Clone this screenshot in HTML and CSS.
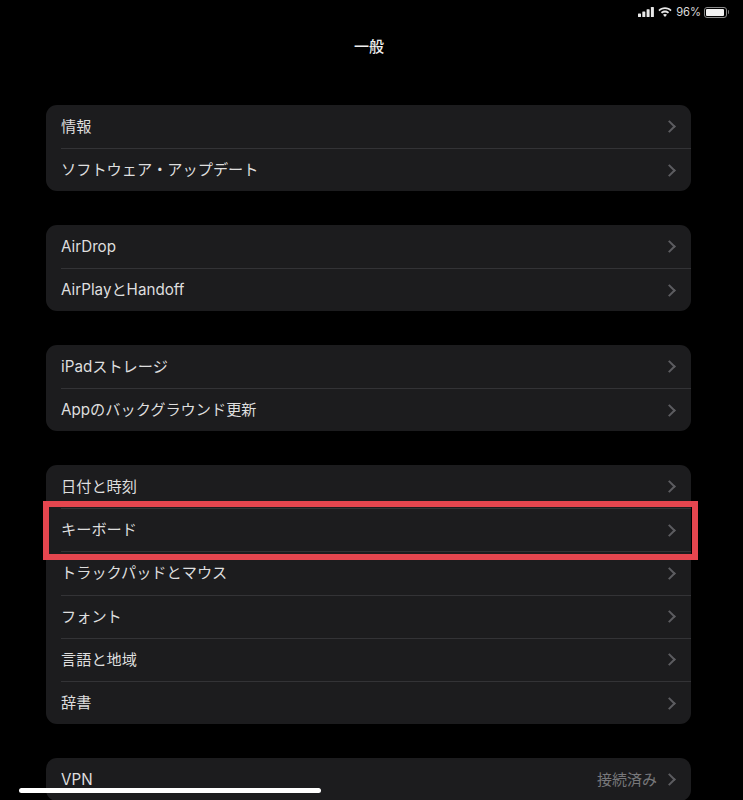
FILE: index.html
```html
<!DOCTYPE html>
<html lang="ja">
<head>
  <meta charset="UTF-8">
  <meta name="viewport" content="width=device-width, initial-scale=1.0">
  <title>一般</title>
  <link rel="stylesheet" href="styles.css">
</head>
<body>
  <!-- Status bar -->
  <div class="status-bar">
    <svg class="signal" width="16" height="10" viewBox="0 0 16 10">
      <rect x="0" y="6.5" width="3" height="3.5" rx="0.6"/>
      <rect x="4.3" y="4.5" width="3" height="5.5" rx="0.6"/>
      <rect x="8.6" y="2.2" width="3" height="7.8" rx="0.6"/>
      <rect x="12.9" y="0" width="3" height="10" rx="0.6"/>
    </svg>
    <svg class="wifi" width="14" height="10" viewBox="0 0 14 10">
      <path d="M7 0.2C4.4 0.2 2.1 1.2 0.4 2.9L1.6 4.2C3 2.8 4.9 2 7 2s4 .8 5.4 2.2l1.2-1.3C11.9 1.2 9.6 .2 7 .2z"/>
      <path d="M7 3.6c-1.6 0-3.1.6-4.1 1.7l1.2 1.3C4.9 5.9 5.9 5.4 7 5.4s2.1.5 2.9 1.2l1.2-1.3C10.1 4.2 8.6 3.6 7 3.6z"/>
      <path d="M7 6.9c-.8 0-1.5.3-2 .8L7 9.9l2-2.2c-.5-.5-1.2-.8-2-.8z"/>
    </svg>
    <span class="percent">96%</span>
    <div class="battery"><div class="battery-level"></div></div>
    <div class="battery-cap"></div>
  </div>

  <!-- Header -->
  <h1 class="title">一般</h1>

  <!-- Content -->
  <div class="content">
    <div class="group">
      <div class="row"><span class="label">情報</span><span class="chevron"></span></div>
      <div class="row"><span class="label">ソフトウェア・アップデート</span><span class="chevron"></span></div>
    </div>
    <div class="group">
      <div class="row"><span class="label">AirDrop</span><span class="chevron"></span></div>
      <div class="row"><span class="label">AirPlayとHandoff</span><span class="chevron"></span></div>
    </div>
    <div class="group">
      <div class="row"><span class="label">iPadストレージ</span><span class="chevron"></span></div>
      <div class="row"><span class="label">Appのバックグラウンド更新</span><span class="chevron"></span></div>
    </div>
    <div class="group group-long">
      <div class="row"><span class="label">日付と時刻</span><span class="chevron"></span></div>
      <div class="row"><span class="label">キーボード</span><span class="chevron"></span></div>
      <div class="row"><span class="label">トラックパッドとマウス</span><span class="chevron"></span></div>
      <div class="row"><span class="label">フォント</span><span class="chevron"></span></div>
      <div class="row"><span class="label">言語と地域</span><span class="chevron"></span></div>
      <div class="row"><span class="label">辞書</span><span class="chevron"></span></div>
    </div>
    <div class="group">
      <div class="row"><span class="label">VPN</span><span class="value">接続済み</span><span class="chevron"></span></div>
    </div>
  </div>

  <!-- Red annotation around the keyboard row -->
  <div class="highlight"></div>
  <div class="home-bar"></div>
</body>
</html>
```

FILE: styles.css
```css
html, body {
  height: 800px;
  overflow: hidden;
}
body {
  font-family: Inter, "Noto Sans CJK JP", "Liberation Sans", sans-serif;
  margin: 0;
  padding: 0;
  background: #000;
  color: #e6e6e6;
  position: relative;
}
.status-bar {
  height: 24px;
  padding: 0 14px 0 0;
  display: flex;
  justify-content: flex-end;
  align-items: center;
  box-sizing: border-box;
  color: #dcdcdc;
}
.signal, .wifi {
  fill: #e8e8e8;
}
.signal {
  margin-right: 4px;
}
.wifi {
  margin-right: 4px;
}
.percent {
  font-size: 11.2px;
  margin-right: 3px;
}
.battery {
  width: 23px;
  height: 11px;
  box-sizing: border-box;
  border: 1px solid #8a8a8a;
  border-radius: 3px;
  padding: 1px;
}
.battery-level {
  width: 96%;
  height: 100%;
  background: #f2f2f2;
  border-radius: 1px;
}
.battery-cap {
  width: 1.5px;
  height: 4px;
  margin-left: 0.5px;
  background: #777;
  border-radius: 0 1px 1px 0;
}
.title {
  margin: 12px 0 0;
  padding-right: 5px;
  height: 22px;
  line-height: 22px;
  text-align: center;
  font-size: 15px;
  font-weight: 500;
  color: #f0f0f0;
}
.content {
  padding: 47px 52px 0 46px;
  display: flex;
  flex-direction: column;
  gap: 34px;
}
.group {
  background: #1c1c1e;
  border-radius: 11px;
  flex-shrink: 0;
}
.row {
  height: 43px;
  box-sizing: border-box;
  margin-left: 15px;
  padding: 0 15px 0 0;
  display: flex;
  align-items: center;
  font-size: 15.2px;
  line-height: 20px;
}
.group-long .row {
  height: 43.2px;
}
.row + .row {
  border-top: 1px solid #333336;
}
.label {
  flex: 1;
  color: #dedede;
}
.value {
  font-size: 15px;
  color: #77777a;
  margin-right: 8px;
}
.chevron {
  width: 7px;
  height: 7px;
  margin-right: 2px;
  border-top: 2px solid #5c5c60;
  border-right: 2px solid #5c5c60;
  transform: rotate(45deg);
}
.highlight {
  position: absolute;
  left: 43px;
  top: 501px;
  width: 655px;
  height: 59px;
  box-sizing: border-box;
  border: 6px solid #e5464f;
}
.home-bar {
  position: absolute;
  left: 19px;
  top: 788px;
  width: 302px;
  height: 5px;
  border-radius: 3px;
  background: #fff;
}
```
